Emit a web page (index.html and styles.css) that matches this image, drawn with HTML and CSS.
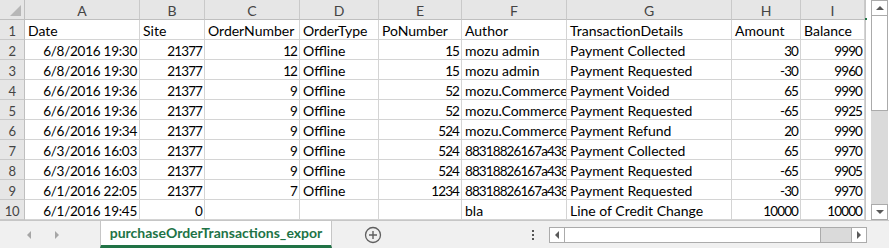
FILE: index.html
```html
<!DOCTYPE html>
<html lang="en">
<head>
  <meta charset="UTF-8">
  <title>purchaseOrderTransactions_export</title>
  <link rel="stylesheet" href="styles.css">
</head>
<body>

  <!-- Planilha + barra de rolagem vertical -->
  <div class="sheet">
    <div class="grid" id="grid">
      <div class="corner"><span class="tri"></span></div>
    </div>

    <div class="vscroll">
      <div class="arrow-box"><span class="arr up"></span></div>
      <div class="vtrack">
        <div class="vthumb"></div>
      </div>
      <div class="arrow-box"><span class="arr down"></span></div>
    </div>
  </div>

  <!-- Abas -->
  <div class="tabbar">
    <div class="nav">
      <span class="nav-arr left"></span>
      <span class="nav-arr right"></span>
    </div>
    <div class="tab">purchaseOrderTransactions_expor</div>
    <div class="add">
      <svg width="18" height="18" viewBox="0 0 18 18">
        <circle cx="9" cy="9" r="7.5" fill="none" stroke="#5f5f5f" stroke-width="1.3"/>
        <path d="M9 5v8M5 9h8" stroke="#5f5f5f" stroke-width="1.4"/>
      </svg>
    </div>
    <div class="dots"><span></span><span></span><span></span></div>
    <div class="hscroll">
      <div class="arrow-box"><span class="arr left"></span></div>
      <div class="hthumb"></div>
      <div class="htrack"></div>
      <div class="arrow-box"><span class="arr right"></span></div>
    </div>
  </div>

  <script>
    const letters = ['A', 'B', 'C', 'D', 'E', 'F', 'G', 'H', 'I'];
    const numCols = [true, true, true, false, true, false, false, true, true];

    const header = ['Date', 'Site', 'OrderNumber', 'OrderType', 'PoNumber', 'Author', 'TransactionDetails', 'Amount', 'Balance'];
    const rows = [
      ['6/8/2016 19:30', '21377', '12', 'Offline', '15', 'mozu admin', 'Payment Collected', '30', '9990'],
      ['6/8/2016 19:30', '21377', '12', 'Offline', '15', 'mozu admin', 'Payment Requested', '-30', '9960'],
      ['6/6/2016 19:36', '21377', '9', 'Offline', '52', 'mozu.Commerce', 'Payment Voided', '65', '9990'],
      ['6/6/2016 19:36', '21377', '9', 'Offline', '52', 'mozu.Commerce', 'Payment Requested', '-65', '9925'],
      ['6/6/2016 19:34', '21377', '9', 'Offline', '524', 'mozu.Commerce', 'Payment Refund', '20', '9990'],
      ['6/3/2016 16:03', '21377', '9', 'Offline', '524', '88318826167a438', 'Payment Collected', '65', '9970'],
      ['6/3/2016 16:03', '21377', '9', 'Offline', '524', '88318826167a438', 'Payment Requested', '-65', '9905'],
      ['6/1/2016 22:05', '21377', '7', 'Offline', '1234', '88318826167a438', 'Payment Requested', '-30', '9970'],
      ['6/1/2016 19:45', '0', '', '', '', 'bla', 'Line of Credit Change', '10000', '10000']
    ];

    const grid = document.getElementById('grid');

    function cell(cls, text) {
      const d = document.createElement('div');
      d.className = cls;
      d.textContent = text;
      grid.appendChild(d);
    }

    letters.forEach(l => cell('col-head', l));

    cell('row-head', '1');
    header.forEach(t => cell('cell', t));

    rows.forEach((r, i) => {
      cell('row-head', String(i + 2));
      r.forEach((t, j) => {
        let cls = numCols[j] ? 'cell num' : 'cell';
        if (j === 0) cls += ' date';
        if (/^[0-9a-f]{8,}$/.test(t)) cls += ' hex';
        cell(cls, t);
      });
    });
  </script>

</body>
</html>
```

FILE: styles.css
```css
body {
  margin: 0;
  width: 889px;
  height: 248px;
  overflow: hidden;
  background-color: #ffffff;
  font-family: Lato, "Open Sans", sans-serif;
  color: #000;
}

.sheet {
  display: flex;
  height: 220px;
}

.grid {
  display: grid;
  grid-template-columns: 25px 115px 65px 95px 79px 83px 105px 165px 69px 64px;
  grid-auto-rows: 20px;
  width: 865px;
  border-right: 1px solid #c6c6c6;
  align-self: flex-start;
  position: relative;
}

/* marca verde no canto do cabeçalho */
.grid::after {
  content: "";
  position: absolute;
  right: -2px;
  top: 18px;
  width: 2px;
  height: 2px;
  background-color: #217346;
}

.corner {
  background-color: #e6e6e6;
  border-right: 1px solid #bfbfbf;
  border-bottom: 1px solid #bfbfbf;
  position: relative;
}

.tri {
  position: absolute;
  right: 3px;
  bottom: 3px;
  width: 0;
  height: 0;
  border-left: 11px solid transparent;
  border-bottom: 11px solid #b7b7b7;
}

.col-head {
  background-color: #e6e6e6;
  border-right: 1px solid #c9c9c9;
  border-bottom: 1px solid #bfbfbf;
  color: #444;
  font-size: 14px;
  text-align: center;
  line-height: 21px;
}

.row-head {
  background-color: #e6e6e6;
  border-right: 1px solid #bfbfbf;
  border-bottom: 1px solid #c9c9c9;
  color: #444;
  font-size: 13px;
  letter-spacing: -0.4px;
  text-align: center;
  line-height: 22px;
}

.cell {
  border-right: 1px solid #d4d4d4;
  border-bottom: 1px solid #d4d4d4;
  font-size: 14px;
  line-height: 22px;
  padding: 0 3px;
  white-space: nowrap;
  overflow: hidden;
}

.cell.num {
  text-align: right;
  padding-right: 2px;
  font-size: 13.5px;
  letter-spacing: -0.9px;
}

.cell.date {
  letter-spacing: -0.25px;
}

.cell.hex {
  font-size: 13.5px;
  letter-spacing: -0.9px;
}

/* barra de rolagem vertical */
.vscroll {
  margin-left: 5px;
  width: 17px;
  height: 220px;
  display: flex;
  flex-direction: column;
  background-color: #dadada;
}

.arrow-box {
  width: 17px;
  height: 16px;
  box-sizing: border-box;
  border: 1px solid #ababab;
  background-color: #fff;
  display: flex;
  align-items: center;
  justify-content: center;
}

.vtrack {
  flex: 1;
  margin-top: -1px;
  margin-bottom: -1px;
}

.vthumb {
  height: 96px;
  box-sizing: border-box;
  border: 1px solid #ababab;
  background-color: #fff;
}

.arr {
  width: 0;
  height: 0;
}

.arr.up {
  border-left: 4px solid transparent;
  border-right: 4px solid transparent;
  border-bottom: 4px solid #5a5a5a;
}

.arr.down {
  border-left: 4px solid transparent;
  border-right: 4px solid transparent;
  border-top: 4px solid #5a5a5a;
}

.arr.left {
  border-top: 4px solid transparent;
  border-bottom: 4px solid transparent;
  border-right: 4px solid #5a5a5a;
}

.arr.right {
  border-top: 4px solid transparent;
  border-bottom: 4px solid transparent;
  border-left: 4px solid #5a5a5a;
}

/* barra das abas */
.tabbar {
  display: flex;
  align-items: center;
  height: 28px;
  background-color: #f0f0f0;
  border-top: 1px solid #c6c6c6;
  box-sizing: border-box;
}

.nav {
  width: 100px;
  display: flex;
  align-items: center;
  gap: 24px;
  padding-left: 27px;
  box-sizing: border-box;
}

.nav-arr {
  width: 0;
  height: 0;
  border-top: 4px solid transparent;
  border-bottom: 4px solid transparent;
}

.nav-arr.left {
  border-right: 4px solid #a6a6a6;
}

.nav-arr.right {
  border-left: 4px solid #a6a6a6;
}

.tab {
  align-self: stretch;
  width: 232px;
  box-sizing: border-box;
  background-color: #fff;
  border-left: 1px solid #c6c6c6;
  border-right: 1px solid #c6c6c6;
  border-bottom: 3px solid #217346;
  color: #217346;
  font-weight: bold;
  font-size: 14px;
  text-align: center;
  line-height: 23px;
  white-space: nowrap;
  overflow: hidden;
}

.add {
  margin-left: 32px;
  height: 18px;
}

.dots {
  margin-left: 150px;
  display: flex;
  flex-direction: column;
  gap: 2px;
}

.dots span {
  width: 2px;
  height: 2px;
  background-color: #555;
}

.hscroll {
  margin-left: 15px;
  width: 318px;
  height: 16px;
  display: flex;
  background-color: #dadada;
}

.hscroll .arrow-box {
  width: 16px;
  height: 16px;
}

.hthumb {
  width: 257px;
  margin-left: -1px;
  box-sizing: border-box;
  border: 1px solid #ababab;
  background-color: #fff;
}

.htrack {
  flex: 1;
  border-top: 1px solid #ababab;
  border-bottom: 1px solid #ababab;
}
```
